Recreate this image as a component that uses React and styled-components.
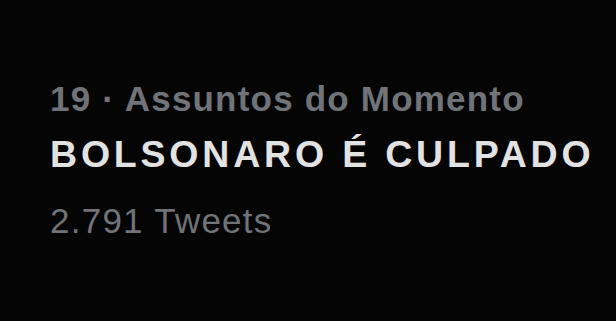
import React from "react";
import styled, { createGlobalStyle } from "styled-components";

const GlobalStyle = createGlobalStyle`
  html, body {
    margin: 0;
    background: #050505;
  }
`;

const Screen = styled.div`
  width: 616px;
  height: 321px;
  box-sizing: border-box;
  padding: 70px 0 0 50px;
  background: #050505;
  font-family: "Liberation Sans", Arial, sans-serif;
`;

const TrendLine = styled.div`
  font-size: ${(p) => p.$size || 35}px;
  line-height: 57px;
  white-space: nowrap;
  color: ${(p) => p.$color};
  font-weight: ${(p) => p.$weight};
  letter-spacing: ${(p) => p.$spacing}px;
  margin-top: ${(p) => p.$gap || 0}px;
`;

const App = () => (
  <>
    <GlobalStyle />
    <Screen>
      <TrendLine $color="#707479" $weight={700} $spacing={1.2}>
        19 · Assuntos do Momento
      </TrendLine>
      <TrendLine $color="#e2e2e2" $weight={700} $size={37.5} $spacing={3.8} $gap={-1}>
        BOLSONARO É CULPADO
      </TrendLine>
      <TrendLine $color="#707479" $weight={400} $spacing={1.25} $gap={9}>
        2.791 Tweets
      </TrendLine>
    </Screen>
  </>
);

export default App;
